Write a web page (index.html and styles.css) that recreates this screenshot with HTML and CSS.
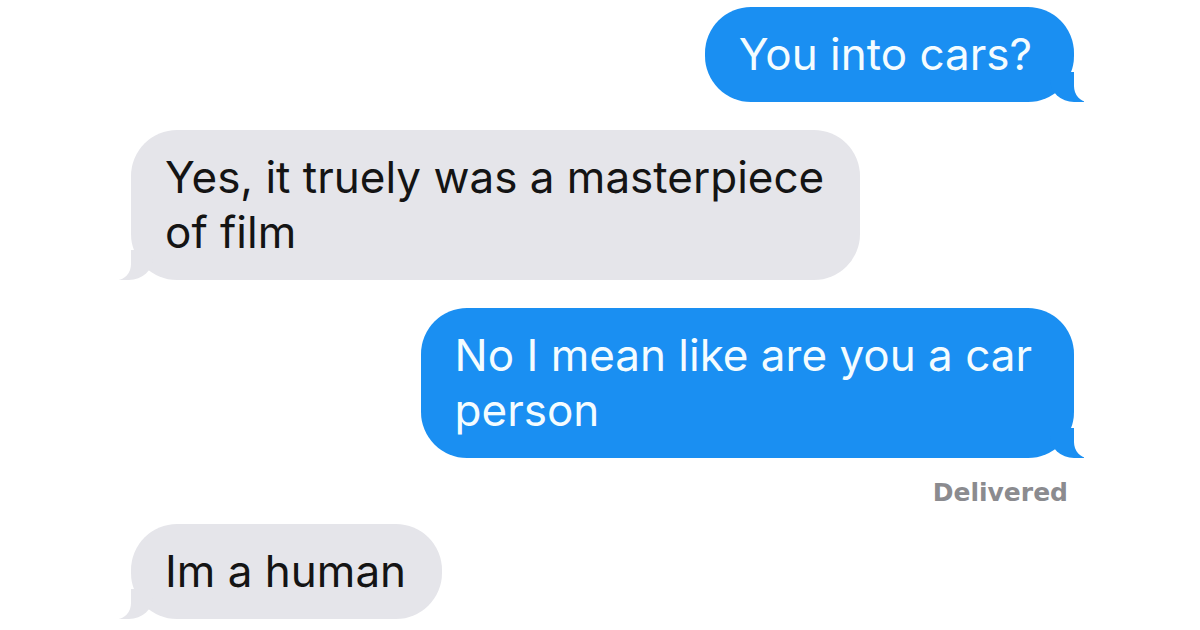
FILE: index.html
```html
<!DOCTYPE html>
<html lang="en">
<head>
<meta charset="utf-8">
<title>Messages</title>
<link rel="stylesheet" href="styles.css">
</head>
<body>
<main class="chat">
  <div class="bubble sent b-first">You into cars?</div>
  <div class="bubble received">Yes, it truely was a masterpiece<br>of film</div>
  <div class="bubble sent">No I mean like are you a car<br>person</div>
  <div class="status">Delivered</div>
  <div class="bubble received b-last">Im a human</div>
</main>
</body>
</html>
```
FILE: styles.css
```css
html, body {
  margin: 0;
  padding: 0;
  background: #ffffff;
}

body {
  width: 1200px;
  height: 630px;
  overflow: hidden;
}

.chat {
  display: flex;
  flex-direction: column;
  padding: 7px 126px 0 131px;
  font-family: "Inter", "Liberation Sans", Arial, sans-serif;
}

.bubble {
  position: relative;
  font-size: 44px;
  line-height: 55px;
  padding: 20px 36px 20px 34px;
  border-radius: 46px;
  max-width: max-content;
  margin-top: 28px;
}

.b-first {
  margin-top: 0;
}

.sent {
  align-self: flex-end;
  background: #1a8ff2;
  color: #f4fcff;
  padding-right: 42px;
}

.received {
  align-self: flex-start;
  background: #e5e5ea;
  color: #141414;
}

.sent::before,
.sent::after,
.received::before,
.received::after {
  content: "";
  position: absolute;
  bottom: 0;
  height: 30px;
}

.sent::before {
  right: -10px;
  width: 34px;
  background: #1a8ff2;
  border-bottom-left-radius: 24px 22px;
}

.sent::after {
  right: -30px;
  width: 30px;
  background: #ffffff;
  border-bottom-left-radius: 14px 16px;
}

.received::before {
  left: -12px;
  width: 34px;
  background: #e5e5ea;
  border-bottom-right-radius: 24px 22px;
}

.received::after {
  left: -32px;
  width: 32px;
  background: #ffffff;
  border-bottom-right-radius: 14px 16px;
}

.status {
  align-self: flex-end;
  margin-top: 20px;
  padding-right: 6px;
  font-family: "DejaVu Sans", "Liberation Sans", sans-serif;
  font-weight: bold;
  font-size: 25px;
  line-height: 30px;
  color: #8b8b8f;
}

.b-last {
  margin-top: 16px;
}
```
